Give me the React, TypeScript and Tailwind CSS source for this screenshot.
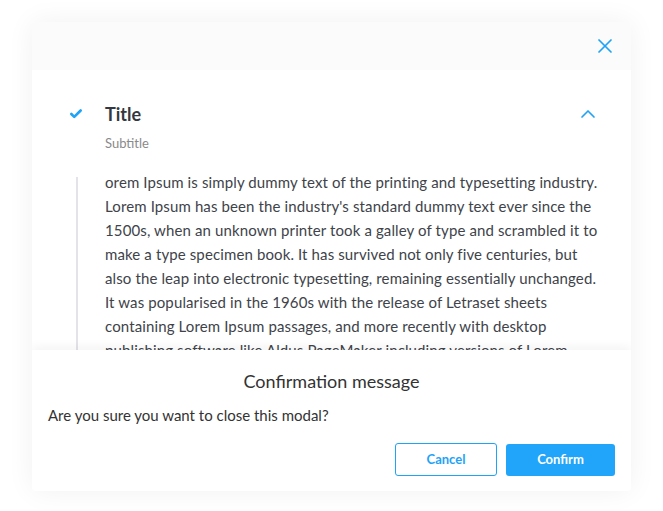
import { X, ChevronUp, Check } from 'lucide-react'

const lines = [
    'orem Ipsum is simply dummy text of the printing and typesetting industry.',
    "Lorem Ipsum has been the industry's standard dummy text ever since the",
    '1500s, when an unknown printer took a galley of type and scrambled it to',
    'make a type specimen book. It has survived not only five centuries, but',
    'also the leap into electronic typesetting, remaining essentially unchanged.',
    'It was popularised in the 1960s with the release of Letraset sheets',
    'containing Lorem Ipsum passages, and more recently with desktop',
    'publishing software like Aldus PageMaker including versions of Lorem',
    'Ipsum.',
]

export default function App() {
    return (
        <div className="h-[511px] bg-white pt-[22px] px-[32px] font-['Lato',sans-serif]">
            <div className="relative w-[599px] h-[469px] rounded-[4px] bg-white shadow-[0_0_28px_rgba(0,0,0,0.06)] overflow-hidden flex flex-col">
                <div className="h-[48px] shrink-0 bg-[#fbfbfb] flex items-center justify-end pr-[14px]">
                    <X size={24} strokeWidth={1.7} className="text-[#1fa3f7]" />
                </div>

                <div className="flex-1 pt-[30px] pl-[37px] pr-[37px]">
                    <div className="flex items-center h-[28px]">
                        <div className="w-[36px] shrink-0 flex">
                            <Check size={14} strokeWidth={4.5} className="text-[#1fa3f7]" />
                        </div>
                        <h2 className="flex-1 text-[18px] font-bold text-[#333840]">Title</h2>
                        <ChevronUp size={24} strokeWidth={1.7} className="text-[#1fa3f7] mr-[-6px]" />
                    </div>
                    <p className="mt-[5px] ml-[36px] text-[13px] leading-[20px] text-[#8a8a8a]">Subtitle</p>

                    <div className="mt-[17px] flex">
                        <div className="w-[36px] shrink-0 pl-[7px] pt-[7px]">
                            <div className="w-[2px] h-[300px] bg-[#e3e3e8]" />
                        </div>
                        <div className="shrink-0 text-[15px] leading-[24px] text-[#40434a] tracking-[0.12px]">
                            {lines.map(line => (
                                <div key={line} className="whitespace-nowrap">{line}</div>
                            ))}
                        </div>
                    </div>
                </div>

                {/* confirmation sheet */}
                <div className="absolute left-0 right-0 bottom-0 h-[141px] bg-white shadow-[0_-3px_10px_rgba(0,0,0,0.05)] px-[16px] pt-[19px]">
                    <h3 className="text-center text-[18px] leading-[24px] text-[#333]">Confirmation message</h3>
                    <p className="mt-[12px] text-[15px] leading-[20px] text-[#333]">Are you sure you want to close this modal?</p>
                    <div className="mt-[18px] flex justify-end items-center gap-[9px]">
                        <button className="w-[102px] h-[33px] rounded-[3px] border border-[#1fa3f7] bg-white text-[13px] font-bold text-[#1fa3f7]">
                            Cancel
                        </button>
                        <button className="w-[109px] h-[32px] rounded-[3px] bg-[#21a5fb] text-[13px] font-bold text-white">
                            Confirm
                        </button>
                    </div>
                </div>
            </div>
        </div>
    )
}
